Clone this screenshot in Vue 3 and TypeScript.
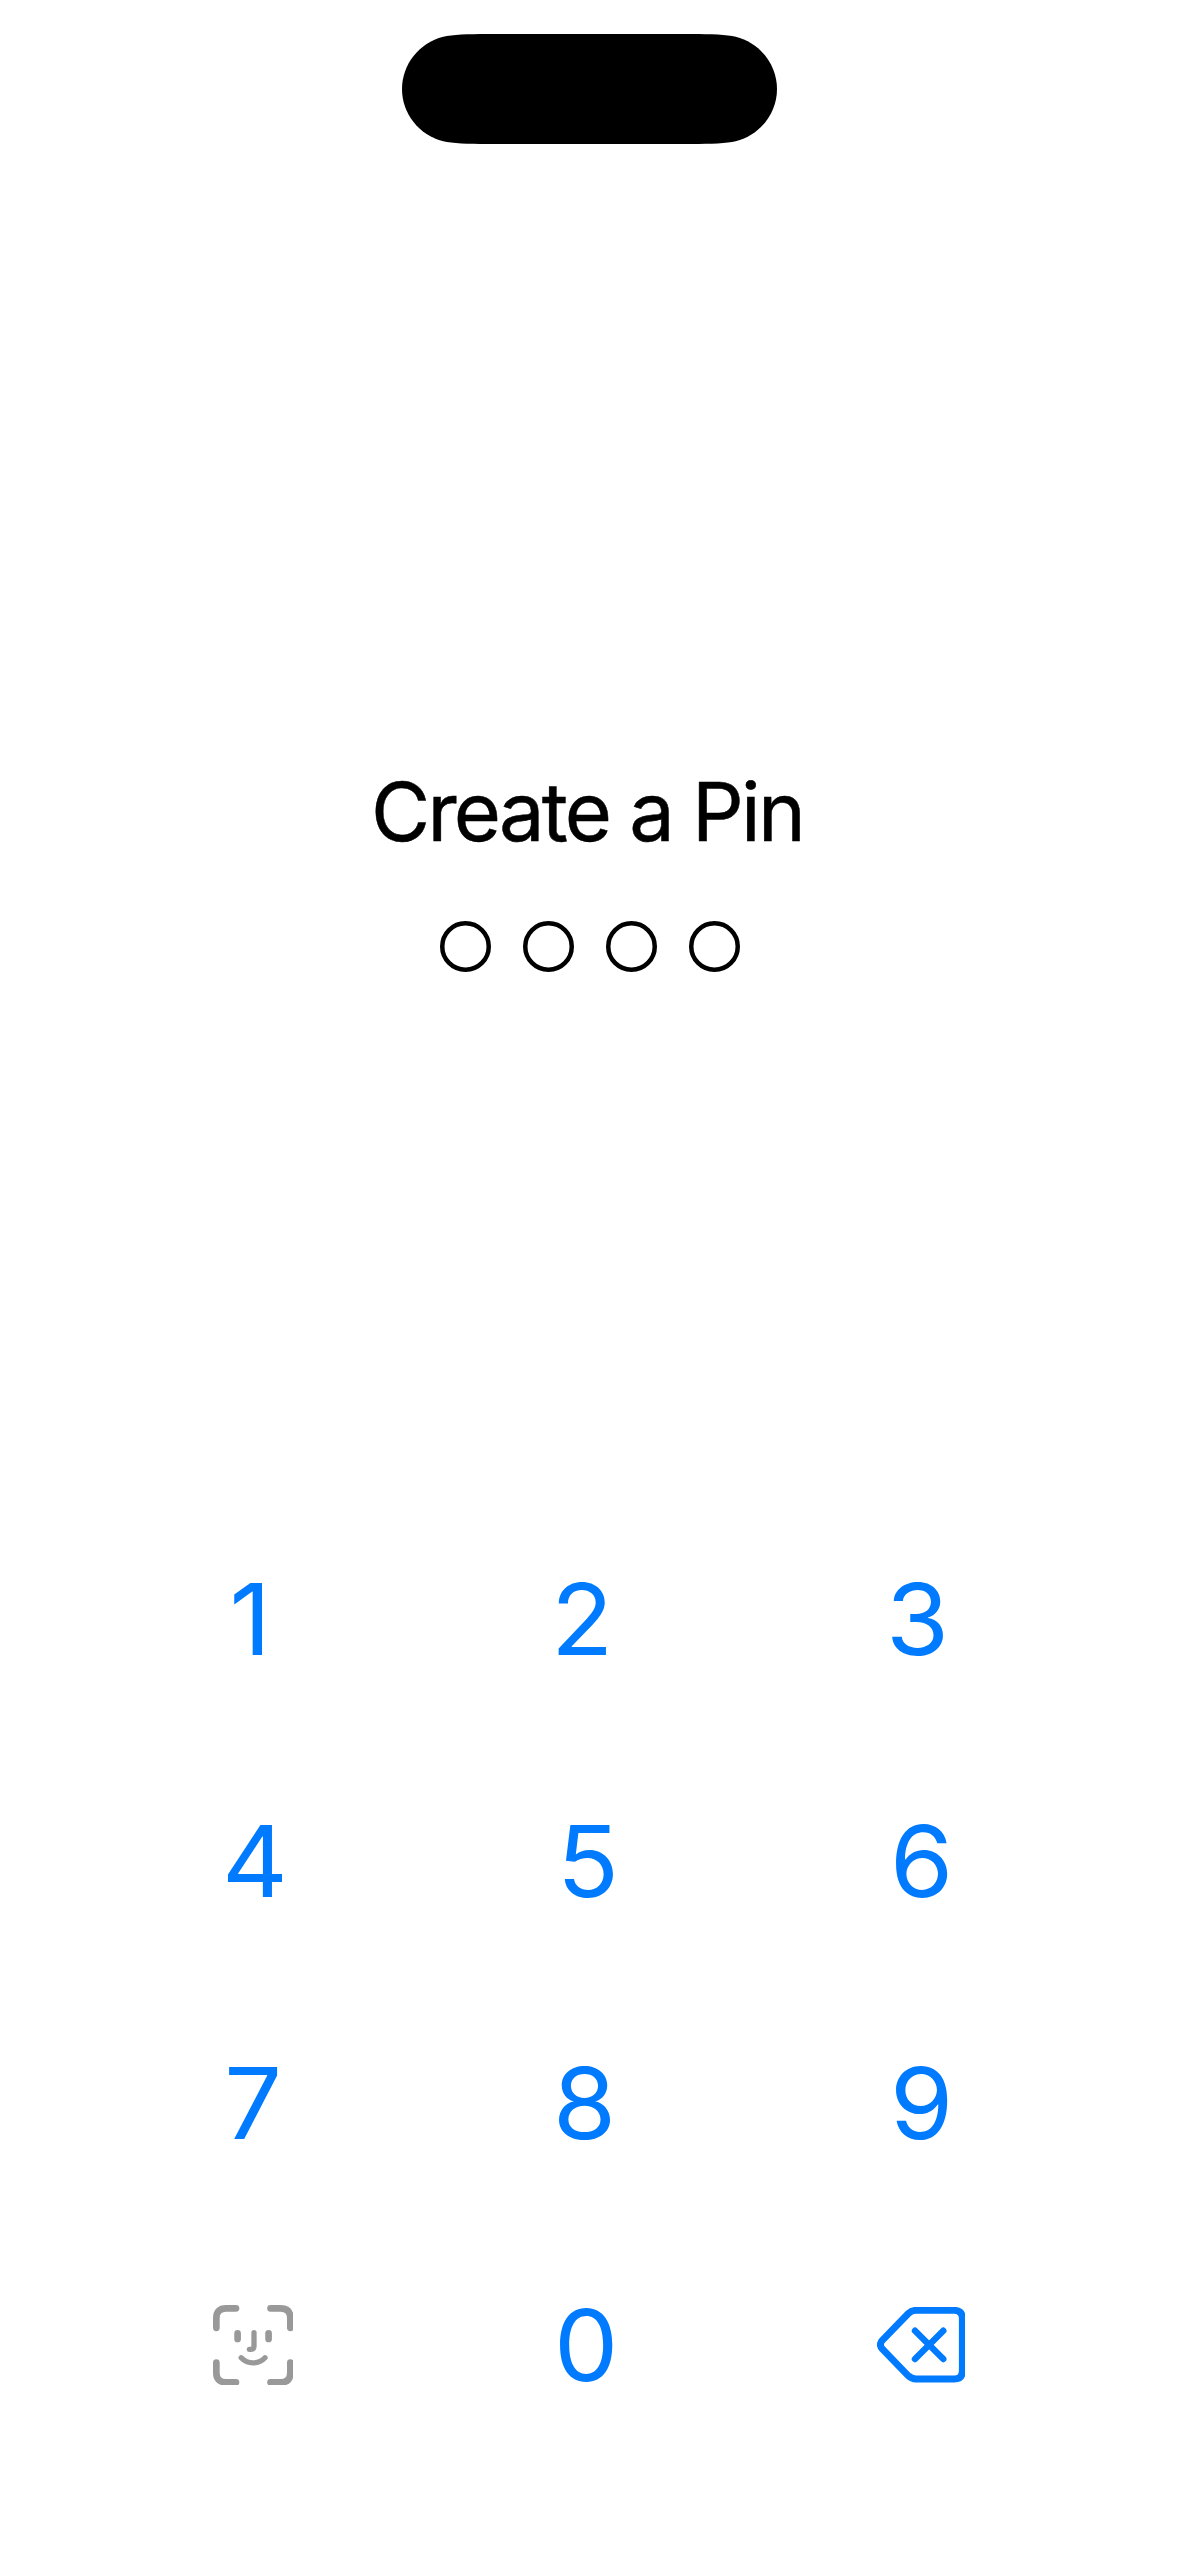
<script setup lang="ts">
import { ref } from 'vue'

interface Key {
  label: string
  // optical shift of the glyph inside its key, in pixels
  shift: number
}

const pinLength = 4
const pin = ref('')

const rows: Key[][] = [
  [{ label: '1', shift: 9.5 }, { label: '2', shift: -2.7 }, { label: '3', shift: -1.5 }],
  [{ label: '4', shift: 2.4 }, { label: '5', shift: 3.5 }, { label: '6', shift: 2.8 }],
  [{ label: '7', shift: 4.2 }, { label: '8', shift: -0.3 }, { label: '9', shift: 2.8 }],
]
const zero: Key = { label: '0', shift: 0.2 }

function press(digit: string) {
  if (pin.value.length < pinLength) pin.value += digit
}

function erase() {
  pin.value = pin.value.slice(0, -1)
}
</script>

<template>
  <main class="screen">
    <svg class="island" viewBox="0 0 375 110" aria-hidden="true">
      <path d="M85 0C66 0 50 .6 41.3 2.7C17 8.8 0 30.5 0 55S17 101.2 41.3 107.3C50 109.4 66 110 85 110H290C309 110 325 109.4 333.7 107.3C358 101.2 375 79.5 375 55S358 8.8 333.7 2.7C325 .6 309 0 290 0Z" />
    </svg>

    <h1 class="title">Create a Pin</h1>

    <div class="dots">
      <svg v-for="n in pinLength" :key="n" class="dot" :class="{ filled: n <= pin.length }" viewBox="0 0 51 51">
        <circle cx="25.5" cy="25.5" r="23.25" />
      </svg>
    </div>

    <div class="keypad">
      <div v-for="(row, i) in rows" :key="i" class="row">
        <button v-for="key in row" :key="key.label" class="key" @click="press(key.label)">
          <span class="digit" :style="{ marginLeft: key.shift + 'px' }">{{ key.label }}</span>
        </button>
      </div>
      <div class="row">
        <button class="key face" aria-label="Face ID" disabled>
          <svg width="80.7" height="80.7" viewBox="0 0 80.7 80.7" fill="none" stroke="currentColor" stroke-linecap="round">
            <g stroke-width="6.7">
              <path d="M3.35 22.8V13Q3.35 3.35 13 3.35H23" />
              <path d="M57.5 3.35H67.7Q77.35 3.35 77.35 13V22.8" />
              <path d="M77.35 57.5V67.7Q77.35 77.35 67.7 77.35H57.5" />
              <path d="M23 77.35H13Q3.35 77.35 3.35 67.7V57.5" />
              <path d="M24.6 28.4V34M55.6 28.4V34" />
            </g>
            <g stroke-width="5.3">
              <path d="M41 27.7V41Q41 44.3 37.8 44.3H36.4" />
              <path d="M28.2 52.8C34.5 59.6 45.7 59.6 52 52.8" />
            </g>
          </svg>
        </button>
        <button class="key" @click="press(zero.label)">
          <span class="digit" :style="{ marginLeft: zero.shift + 'px' }">{{ zero.label }}</span>
        </button>
        <button class="key delete" aria-label="Delete" @click="erase">
          <svg width="88.7" height="75.3" viewBox="0 0 88.7 75.3" fill="none" stroke="currentColor" stroke-linecap="round">
            <path stroke-width="6.9" d="M39 3.35H77.3Q85.35 3.35 85.35 11.4V63.9Q85.35 71.95 77.3 71.95H39Q34.5 71.95 31.3 68.8L5.3 42Q1.5 37.65 5.3 33.3L31.3 6.5Q34.5 3.35 39 3.35Z" />
            <path stroke-width="6.4" d="M38 23.7L66.3 52M66.3 23.7L38 52" />
          </svg>
        </button>
      </div>
    </div>
  </main>
</template>

<style>
body {
  margin: 0;
  background: #fff;
}
</style>

<style scoped>
.screen {
  box-sizing: border-box;
  width: 1179px;
  height: 2556px;
  padding-top: 34px;
  display: flex;
  flex-direction: column;
  align-items: center;
  background: #fff;
  color: #000;
  font-family: Inter, "Liberation Sans", sans-serif;
  overflow: hidden;
}
.island {
  flex: none;
  width: 375px;
  height: 110px;
}
.title {
  margin: 618px 0 0;
  padding-right: 5px;
  height: 100px;
  line-height: 100px;
  font-size: 81px;
  font-weight: 400;
  letter-spacing: -2.75px;
  -webkit-text-stroke: 0.5px #000;
  white-space: nowrap;
}
.dots {
  display: flex;
  gap: 32px;
  margin-top: 59px;
}
.dot {
  width: 51px;
  height: 51px;
  fill: none;
  stroke: #000;
  stroke-width: 4.5px;
}
.dot.filled {
  fill: #000;
}
.keypad {
  width: 1002px;
  margin-top: 526px;
}
.row {
  display: flex;
  height: 242px;
}
.key {
  box-sizing: border-box;
  width: 334px;
  height: 242px;
  padding: 0 0 0 132px;
  border: 0;
  background: none;
  display: flex;
  align-items: center;
  color: #007aff;
  font: inherit;
  font-size: 99px;
  line-height: 120px;
}
.digit {
  transform: scaleX(1.03);
}
.face {
  padding-left: 124px;
  color: #999;
}
.delete {
  padding-left: 120px;
}
.key svg {
  flex: none;
}
</style>
